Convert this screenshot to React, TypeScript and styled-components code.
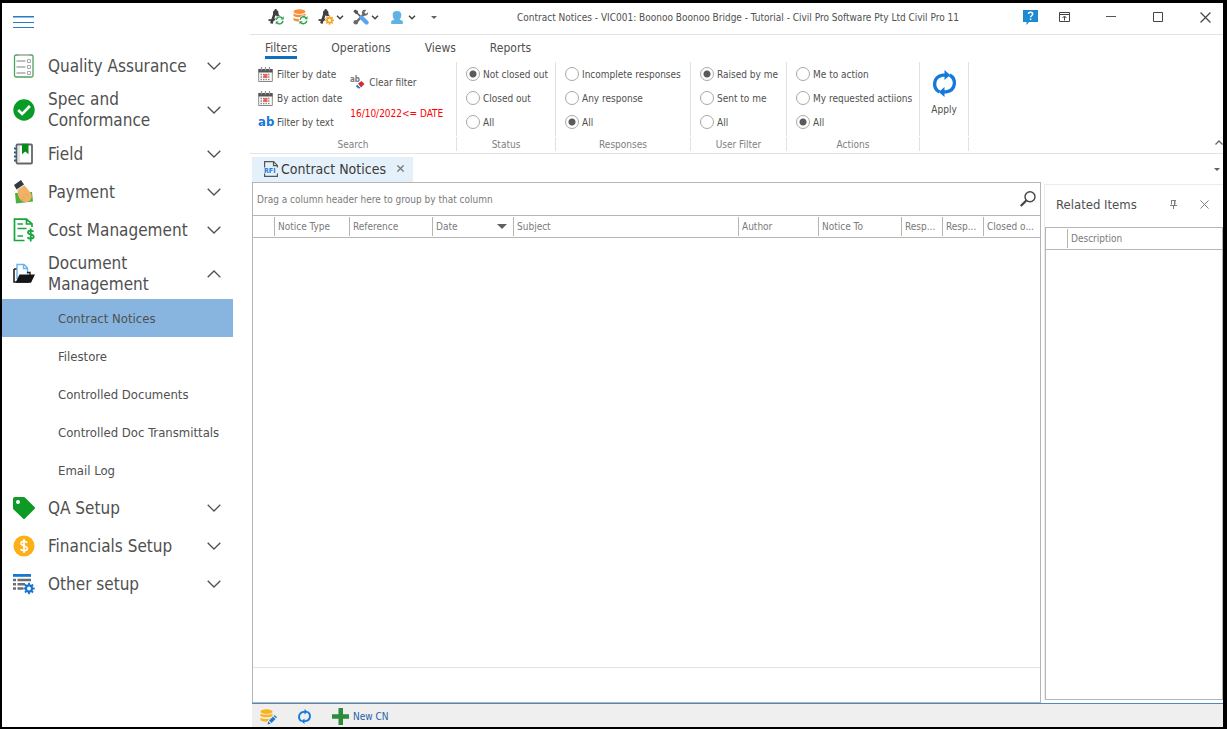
import React from "react";
import styled, { createGlobalStyle } from "styled-components";

const GlobalStyle = createGlobalStyle`
  *, *::before, *::after { box-sizing: border-box; }
  body { margin: 0; background: #000; }
  body, button, input { font-family: "DejaVu Sans Condensed", "DejaVu Sans", sans-serif; }
  button { background: none; border: 0; padding: 0; color: inherit; text-align: left; cursor: pointer; }
  svg { display: block; flex: none; }
  ul { list-style: none; margin: 0; padding: 0; }
`;

const Frame = styled.div`
  display: flex;
  min-height: 100vh;
  border: solid #000;
  border-width: 3px 4px 2px 2px;
  background: #fff;
  color: #505050;
  font-size: 10px;
  overflow: hidden;
`;

/* Sidebar */
const Sidebar = styled.nav`
  width: 248px;
  flex: none;
  padding-right: 17px;
`;
const MenuButton = styled.button`
  display: block;
  height: 44px;
  padding: 13px 11px 18px;
`;
const GroupButton = styled.button<{ $tall?: boolean }>`
  display: grid;
  grid-template-columns: 22px 1fr 14px;
  align-items: center;
  column-gap: 13px;
  width: 100%;
  height: ${(p) => (p.$tall ? 50 : 38)}px;
  padding: 0 12px 0 11px;
  font-size: 17px;
  line-height: 21px;
`;
const GroupText = styled.span<{ $narrow?: boolean }>`
  max-width: ${(p) => (p.$narrow ? "120px" : "none")};
  white-space: ${(p) => (p.$narrow ? "normal" : "nowrap")};
`;
const SubButton = styled.button<{ $active?: boolean }>`
  width: 100%;
  height: 38px;
  padding-left: 56px;
  font-size: 13px;
  white-space: nowrap;
  display: block;
  background: ${(p) => (p.$active ? "#88b5df" : "transparent")};
`;

/* Main column */
const Main = styled.main`
  flex: 1;
  min-width: 0;
  display: flex;
  flex-direction: column;
`;
const TitleBar = styled.header`
  display: flex;
  align-items: center;
  height: 32px;
  border-bottom: 1px solid #e3e3e3;
  padding-bottom: 3px;
`;
const QuickBar = styled.div`
  display: flex;
  align-items: center;
  width: 208px;
  padding-left: 18px;
  gap: 9px;
`;
const QuickButton = styled.button`
  display: flex;
  align-items: center;
  gap: 2px;
`;
const UserButton = styled(QuickButton)`
  gap: 5px;
  margin: 0 6px 0 3px;
`;
const Title = styled.h1`
  flex: 1;
  margin: 0;
  font-size: 10px;
  font-weight: 400;
  text-align: center;
  white-space: nowrap;
`;
const HelpButton = styled.button`
  display: grid;
  place-items: center;
  width: 24px;
  margin-right: 4px;
`;
const WindowButtons = styled.div`
  display: flex;
  gap: 11px;
`;
const WindowButton = styled.button`
  display: grid;
  place-items: center;
  width: 36px;
  height: 28px;
`;

/* Ribbon */
const RibbonTabs = styled.div`
  display: flex;
  gap: 34px;
  height: 27px;
  padding: 5px 15px 0;
`;
const RibbonTab = styled.button<{ $active?: boolean }>`
  height: 19px;
  font-size: 12px;
  line-height: 16px;
  border-bottom: 3px solid ${(p) => (p.$active ? "#106ebe" : "transparent")};
`;
const Ribbon = styled.div`
  display: flex;
  height: 92px;
  border-bottom: 1px solid #e3e3e3;
`;
const RibbonGroup = styled.fieldset<{ $width: number }>`
  display: flex;
  flex-direction: column;
  width: ${(p) => p.$width}px;
  min-width: 0;
  margin: 0;
  padding: 0;
  border: 0;
`;
const GroupBody = styled.div`
  flex: none;
  display: flex;
  height: 74px;
  border-right: 1px solid #e1e1e1;
`;
const GroupLabel = styled.div`
  height: 14px;
  margin-top: 1px;
  line-height: 16px;
  border-right: 1px solid #e1e1e1;
  text-align: center;
  color: #808080;
`;
const Stack = styled.div<{ $indent: number }>`
  display: flex;
  flex-direction: column;
  padding-left: ${(p) => p.$indent}px;
`;
const Command = styled.button`
  display: flex;
  align-items: center;
  gap: 4px;
  height: 24px;
  font-size: 10px;
  white-space: nowrap;
`;
const ClearStack = styled.div`
  display: flex;
  flex-direction: column;
  gap: 8px;
  padding: 8px 0 0 8px;
`;
const FilterExpression = styled.output`
  height: 24px;
  line-height: 24px;
  color: #f00;
  white-space: nowrap;
`;
const Option = styled.label`
  display: flex;
  align-items: center;
  gap: 3px;
  height: 24px;
  white-space: nowrap;
`;
const Radio = styled.input`
  appearance: none;
  flex: none;
  width: 14px;
  height: 14px;
  margin: 0;
  border: 1px solid #a8a8a8;
  border-radius: 50%;
  background: #fff;
  &:checked { background: radial-gradient(circle, #5a5a5a 3px, #fff 4px); }
`;
const ApplyButton = styled.button`
  display: flex;
  flex-direction: column;
  align-items: center;
  gap: 7px;
  width: 100%;
  padding-top: 8px;
  font-size: 10px;
`;
const Collapse = styled.button`
  align-self: flex-end;
  margin: 0 0 8px auto;
`;

/* Documents */
const DocTabs = styled.div`
  display: flex;
  justify-content: space-between;
  height: 28px;
  padding: 3px 0 0 2px;
`;
const DocTab = styled.div`
  display: flex;
  align-items: center;
  width: 161px;
  padding: 0 0 2px 12px;
  background: #e5f1fa;
  font-size: 14px;
  gap: 3px;
  white-space: nowrap;
  color: #3a3a3a;
`;
const CloseTab = styled.button`
  margin-left: 8px;
`;
const TabMenu = styled.button`
  margin-right: 3px;
`;
const Workspace = styled.div`
  flex: 1;
  display: flex;
  gap: 3px;
  padding-left: 2px;
`;
const GridPanel = styled.section`
  flex: 1;
  min-width: 0;
  display: flex;
  flex-direction: column;
  border: 1px solid #b5b5b5;
`;
const GroupingRow = styled.div`
  display: flex;
  align-items: center;
  justify-content: space-between;
  height: 33px;
  padding: 0 4px;
  color: #7a7a7a;
  border-bottom: 1px solid #b5b5b5;
`;
const Table = styled.table`
  width: 100%;
  table-layout: fixed;
  border-collapse: separate;
  border-spacing: 0;
  border-bottom: 1px solid #b5b5b5;
`;
const Th = styled.th<{ $width?: number }>`
  width: ${(p) => (p.$width ? p.$width + "px" : "auto")};
  height: 21px;
  padding: 0;
  font-weight: 400;
  text-align: left;
  color: #7a7a7a;
`;
const HeadCell = styled.div<{ $first?: boolean }>`
  display: flex;
  align-items: center;
  justify-content: space-between;
  height: 19px;
  padding: 0 6px 0 3px;
  border-left: 1px solid ${(p) => (p.$first ? "transparent" : "#b5b5b5")};
  white-space: nowrap;
`;
const GridFooter = styled.div`
  height: 35px;
  margin-top: auto;
  border-top: 1px solid #e3e3e3;
`;
const SidePanel = styled.aside`
  display: flex;
  flex-direction: column;
  width: 179px;
  margin: 2px 0 3px;
  border: solid #ececec;
  border-width: 1px 0 0 1px;
`;
const SideTitle = styled.div`
  display: flex;
  align-items: center;
  height: 42px;
  padding: 0 14px 3px 11px;
`;
const SideHeading = styled.h2`
  flex: 1;
  margin: 0;
  font-size: 13px;
  font-weight: 400;
`;
const SideTools = styled.div`
  display: flex;
  align-items: center;
  gap: 23px;
`;
const SideGrid = styled.div`
  flex: 1;
  border: 1px solid #b5b5b5;
`;
const StatusBar = styled.footer`
  display: flex;
  align-items: center;
  gap: 20px;
  height: 24px;
  margin-left: 2px;
  padding: 2px 0 0 8px;
  background: #efefef;
  border-top: 1px solid #4a8ac6;
`;
const StatusButton = styled.button`
  display: flex;
  align-items: center;
  gap: 4px;
  font-size: 10px;
  color: #1f5fa8;
`;

/* Icons */
const Chevron = ({ up }: { up?: boolean }) => (
  <svg width="14" height="8" viewBox="0 0 14 8" fill="none" stroke="#505050" strokeWidth="1.3">
    <path d={up ? "M.7 7.3 7 1l6.3 6.3" : "M.7.7 7 7 13.3.7"} />
  </svg>
);
const SmallChevron = () => (
  <svg width="8" height="5" viewBox="0 0 8 5" fill="none" stroke="#444" strokeWidth="1.5">
    <path d="M1 .7 4 3.7 7 .7" />
  </svg>
);
const MenuIcon = () => (
  <svg width="21" height="13" viewBox="0 0 21 13" fill="#2a7bc8">
    <path d="M0 0h21v1.500H0zM0 6h21v1H0zM0 11h21v1H0z" />
  </svg>
);
const ChecklistIcon = () => (
  <svg width="22" height="24" viewBox="0 0 22 24" fill="none">
    <rect x="1.500" y="1" width="18.500" height="22" rx="1.500" stroke="#4ea35e" strokeWidth="1.300" />
    <path d="M5.500 1h11" stroke="#bbb" strokeWidth="1.800" />
    <path d="M3.500 7h9M3.500 13h9M3.500 19h9" stroke="#aaa" strokeWidth="1.300" />
    <path d="M14.500 5.500h3v3h-3zM14.500 11.500h3v3h-3zM14.500 17.500h3v3h-3z" stroke="#aaa" />
  </svg>
);
const CheckIcon = () => (
  <svg width="22" height="22" viewBox="0 0 22 22">
    <circle cx="11" cy="11" r="10.700" fill="#089c26" />
    <path d="m5.200 11 4 4 7.700-8" fill="none" stroke="#fff" strokeWidth="2.600" />
  </svg>
);
const NotebookIcon = () => (
  <svg width="22" height="22" viewBox="0 0 22 22">
    <rect x="3.500" y="1.500" width="15.500" height="19" rx="1" fill="#fff" stroke="#666" strokeWidth="1.800" />
    <path d="M6 2v18" stroke="#c8c8c8" strokeWidth="1" />
    <path d="M9 .700h6.500v10.600l-3.200-2.800L9 11.300z" fill="#068a1c" />
    <path d="M1 5.500h3M1 9.500h3M1 13.500h3M1 17.500h3" stroke="#2f5f86" strokeWidth="1.800" />
  </svg>
);
const PaymentIcon = () => (
  <svg width="22" height="24" viewBox="0 0 22 24">
    <path d="m2 13 17-1 1 9.500L3 23.500z" fill="#4fae3f" />
    <path d="M5 8c2-3 5-3.500 7-2l5 6c2.500 3 2 6 0 8.500-3 2-6 2-8 .500-4-3-5-8-4-13z" fill="#f2b266" />
    <path d="m9 16 4 3M8 18.500l3 2M12 13.500l4 3" stroke="#e0a05c" strokeWidth=".7" fill="none" />
    <path d="M1 5 8 0l3 4.500L3.500 9.500z" fill="#34393f" />
    <path d="m4 10 7.500-5" stroke="#d9dde0" strokeWidth="1.200" />
  </svg>
);
const CostIcon = () => (
  <svg width="22" height="24" viewBox="0 0 22 24" fill="none" stroke="#17a63c" strokeWidth="1.700">
    <path d="M11.500 22.500H1.500V1.200h12L19 6v3M13.500 1.200V6H19" />
    <path d="M4.500 6H10M4.500 10.500h9M4.500 18H10" />
    <path d="M20.500 13.700c-1-1.500-5.500-1.700-5.500.7 0 2.600 5.700 1.400 5.700 4.200 0 2.700-5 2.700-6.200.6M17.700 10.500v13" strokeWidth="1.800" />
  </svg>
);
const FolderIcon = () => (
  <svg width="22" height="22" viewBox="0 0 22 22">
    <path d="M1 6v13h15" fill="none" stroke="#222" strokeWidth="1.600" />
    <path d="M4 16V1.500h7l3.500 3.500v6M10.500 1.500V5.500h4" fill="#fff" stroke="#68b3f0" strokeWidth="1.400" />
    <path d="M1 6h2.500M14 9.500h3V12" fill="none" stroke="#222" strokeWidth="1.400" />
    <path d="M6.500 11.500H22l-4 8.300H2.500z" fill="#151515" />
  </svg>
);
const TagIcon = () => (
  <svg width="22" height="22" viewBox="0 0 22 22">
    <path fillRule="evenodd" d="M0 2C0 .900.900 0 2 0h8.500q1 0 1.500.6L21.500 10q1 1 0 2L12 21.500q-1 1-2 0L.6 12.500Q0 12 0 11zM5 3a2 2 0 1 0 0 4 2 2 0 0 0 0-4z" fill="#0d9b25" />
  </svg>
);
const CoinIcon = () => (
  <svg width="22" height="22" viewBox="0 0 22 22" fill="none">
    <circle cx="11" cy="11" r="10.500" fill="#fdaf17" />
    <path d="M14 7.800c-1-2-6-1.900-6 .7 0 2.900 6.300 1.900 6.300 5 0 2.800-5.500 2.700-6.700.6M11 4v14" stroke="#fff" strokeWidth="1.700" />
  </svg>
);
const gearTeeth = [0, 45, 90, 135, 180, 225, 270, 315];
const Gear = ({ x, y, color, scale = 1 }: { x: number; y: number; color: string; scale?: number }) => (
  <g transform={`translate(${x} ${y}) scale(${scale})`}>
    <circle r="3.200" fill="none" stroke={color} strokeWidth="2.400" />
    {gearTeeth.map((a) => (
      <rect key={a} x="-1" y="-6" width="2" height="2.500" fill={color} transform={`rotate(${a})`} />
    ))}
  </g>
);
const SettingsListIcon = () => (
  <svg width="22" height="22" viewBox="0 0 22 22">
    <path d="M0 1h18v2.800H0z" fill="#1976d2" />
    <path d="M0 5.800h3v2.500H0zM4.500 5.800H18v2.500H4.500zM0 10h3v2.500H0zM4.500 10H12v2.500H4.500zM0 14.200h3v2.500H0zM4.500 14.200H10v2.500H4.500z" fill="#6d6d72" />
    <Gear x={16} y={15.500} color="#1976d2" scale={0.95} />
  </svg>
);
const MiniRefresh = ({ x, y }: { x: number; y: number }) => (
  <g transform={`translate(${x} ${y})`}>
    <circle r="4.600" fill="#fff" />
    <path d="M-3.300-.5A3.300 3.300 0 0 1 2.300-2.500M3.300.5A3.300 3.300 0 0 1-2.300 2.500" fill="none" stroke="#25a045" strokeWidth="1.400" />
    <path d="M4-4.200V-1H.8zM-4 4.200V1H-.8z" fill="#25a045" />
  </g>
);
const CompassIcon = ({ badge }: { badge: "refresh" | "gear" }) => (
  <svg width="16" height="16" viewBox="0 0 16 16">
    <path d="M7.200 3 3.300 14.500M8.200 3l4 9" stroke="#404040" strokeWidth="2.600" fill="none" />
    <path d="M.5 10.800c4 .8 8.500-.6 11.500-4" stroke="#404040" strokeWidth="1.800" fill="none" />
    <path d="M6.800 0h1.800v2H6.800z" fill="#404040" />
    <circle cx="7.700" cy="3.700" r="2.700" fill="#404040" />
    {badge === "refresh" ? <MiniRefresh x={11.700} y={11.400} /> : (
      <>
        <circle cx="11.500" cy="11.300" r="4.600" fill="#fff" />
        <Gear x={11.500} y={11.300} color="#f5a623" scale={0.75} />
      </>
    )}
  </svg>
);
const Cylinders = ({ color }: { color: string }) => (
  <g fill={color}>
    <ellipse cx="6.500" cy="2.600" rx="6" ry="2.300" />
    <path d="M.5 4.200c2 2 10 2 12 0v2.500c-2 2.200-10 2.200-12 0zM.5 8.500c2 2 10 2 12 0V11c-2 2.200-10 2.200-12 0z" />
  </g>
);
const DatabaseRefreshIcon = () => (
  <svg width="16" height="16" viewBox="0 0 16 16">
    <Cylinders color="#f5903d" />
    <MiniRefresh x={10.500} y={11.200} />
  </svg>
);
const DatabaseEditIcon = () => (
  <svg width="17" height="17" viewBox="0 0 17 17">
    <g transform="translate(0 1)"><Cylinders color="#fbb31c" /></g>
    <path d="m6.500 17 1-4 6.500-6.500 3 3-6.500 6.500z" fill="#efefef" />
    <path d="m7.500 16.500.8-3.200 2.400 2.400zM9 12.600l4-4 2.500 2.500-4 4zM13.700 8l1-1L17 9.300l-1 1z" fill="#2577c9" />
  </svg>
);
const ToolsIcon = () => (
  <svg width="16" height="16" viewBox="0 0 16 16" fill="none">
    <path d="m10.500 5.500-7.500 8" stroke="#686868" strokeWidth="2.400" />
    <path d="M10 1.300c-2 2-1 5 1.500 5.500 2 .3 4-1.500 3.700-3.800L13 5l-1.800-1.700L13.300 1.200c-1-.6-2.300-.6-3.300.1z" fill="#686868" />
    <circle cx="2.800" cy="13.300" r="2.300" fill="#686868" />
    <path d="M.3 2.200 2 .500l3 1.600v1.700L4.500 4.500 3 5.200z" fill="#555" />
    <path d="m3.500 3.500 4.500 4.500" stroke="#555" strokeWidth="1.600" />
    <path d="m8.500 8.500 5 5" stroke="#5aa6ea" strokeWidth="4.200" strokeLinecap="round" />
  </svg>
);
const UserIcon = () => (
  <svg width="12" height="13" viewBox="0 0 12 13" fill="#5fb2e4">
    <path d="M6 0c3 0 4.300 1.600 4.300 4 0 2-.7 3.600-1.800 4.600L11.800 10v3H.2v-3l3.300-1.400C2.400 7.600 1.700 6 1.700 4 1.700 1.600 3 0 6 0z" />
  </svg>
);
const CalendarIcon = () => (
  <svg width="15" height="15" viewBox="0 0 15 15">
    <path d="M.7 2.500h13.600V14.500H.7z" fill="#fff" stroke="#8a8a8a" />
    <path d="M.5 2h14v3.500H.5z" fill="#555" />
    <path d="M3.500 0v3.500M7.500 0v3.500M11.500 0v3.500" stroke="#999" strokeWidth="1.300" />
    <path d="M2.500 7.500h10M2.500 10h10M2.500 12.500h10" stroke="#8a8a8a" strokeWidth="1.300" strokeDasharray="1.500 1" />
    <path d="M5.500 7h4v4h-4z" fill="#f2615c" />
  </svg>
);
const AbText = styled.span`
  width: 15px;
  font: bold 13px "DejaVu Sans Condensed", "DejaVu Sans", sans-serif;
  line-height: 14px;
  color: #1878d4;
`;
const ClearFilterIcon = () => (
  <svg width="15" height="14" viewBox="0 0 15 14">
    <text x="0" y="7" fontSize="8" fontWeight="bold" fill="#777">ab</text>
    <path d="m8 8.500 3.500-2.500 3 3L11 12.500z" fill="#d12f2f" />
    <path d="m7 9.500 3.300 3.300-1.500 1L6 11.500z" fill="#2a72cc" />
  </svg>
);
const RefreshIcon = ({ size }: { size: number }) => (
  <svg width={size} height={size} viewBox="0 0 26 26" fill="none" stroke="#1579dc" strokeWidth="3.200">
    <path d="M8 21.200C1.500 17.500 1.500 6.500 11.500 4.900h3M18 4.800c6.500 3.700 6.500 14.700-3.500 16.300h-3" />
    <path d="M13 0v9.700L18.500 4.900zM13 26v-9.700L7.500 21.100z" fill="#1579dc" stroke="none" />
  </svg>
);
const HelpIcon = () => (
  <svg width="15" height="16" viewBox="0 0 15 16">
    <path d="M0 1h15v12H6l-2.500 3V13H0z" fill="#1e8ad2" />
    <path d="M5.500 5c0-2.300 4.200-2.200 4.200 0 0 1.500-2.100 1.500-2.100 3.300M7.600 9.500v1.600" fill="none" stroke="#fff" strokeWidth="1.500" />
  </svg>
);
const RibbonDisplayIcon = () => (
  <svg width="11" height="10" viewBox="0 0 11 10" fill="none" stroke="#444">
    <path d="M.5.5h10v9H.5zM.5 2.500h10M5.500 8.500v-4M3.500 6l2-2 2 2" />
  </svg>
);
const CloseIcon = ({ size, color }: { size: number; color: string }) => (
  <svg width={size} height={size} viewBox="0 0 10 10" stroke={color} strokeWidth={size > 7 ? 1.1 : 1.8}>
    <path d="m.5.5 9 9M9.500.5l-9 9" />
  </svg>
);
const Caret = ({ width = 6 }: { width?: number }) => (
  <svg width={width} height={width / 2} viewBox="0 0 6 3" fill="#606060">
    <path d="M0 0h6L3 3z" />
  </svg>
);
const RfiIcon = () => (
  <svg width="14" height="16" viewBox="0 0 14 16">
    <path d="M.6.6h9L13.400 4.400v11H.6zM9.500.6v4h4" fill="none" stroke="#555" strokeWidth="1.200" />
    <path d="M0 6.500h14v6H0z" fill="#e5f1fa" />
    <text x="0" y="12" fontSize="7" fontWeight="bold" fill="#1b7fdd">RFI</text>
  </svg>
);
const SearchIcon = () => (
  <svg width="16" height="16" viewBox="0 0 16 16" fill="none" stroke="#444">
    <circle cx="10" cy="5.800" r="5" strokeWidth="1.400" />
    <path d="M6.300 9.500.800 15" strokeWidth="2.200" />
  </svg>
);
const PinIcon = () => (
  <svg width="7" height="9" viewBox="0 0 7 9" fill="none" stroke="#808080">
    <path d="M1 .5h5M1.500.5v4M5 .5v4M4.500 1v4M0 5.500h7M3.500 5.500V9" />
  </svg>
);
const PlusIcon = () => (
  <svg width="17" height="17" viewBox="0 0 17 17" fill="#2c8b3c">
    <path d="M6.500 0h4.500v6.300h6v4.400h-6V17H6.500v-6.300H0V6.300h6.500z" />
  </svg>
);

type NavGroup = { label: string; icon: React.ReactNode; tall?: boolean; children?: string[] };
const navGroups: NavGroup[] = [
  { label: "Quality Assurance", icon: <ChecklistIcon /> },
  { label: "Spec and Conformance", icon: <CheckIcon />, tall: true },
  { label: "Field", icon: <NotebookIcon /> },
  { label: "Payment", icon: <PaymentIcon /> },
  { label: "Cost Management", icon: <CostIcon /> },
  {
    label: "Document Management", icon: <FolderIcon />, tall: true,
    children: ["Contract Notices", "Filestore", "Controlled Documents", "Controlled Doc Transmittals", "Email Log"],
  },
  { label: "QA Setup", icon: <TagIcon /> },
  { label: "Financials Setup", icon: <CoinIcon /> },
  { label: "Other setup", icon: <SettingsListIcon /> },
];

const radioGroups = [
  { label: "Status", width: 99, options: ["Not closed out", "Closed out", "All"], checked: 0 },
  { label: "Responses", width: 135, options: ["Incomplete responses", "Any response", "All"], checked: 2 },
  { label: "User Filter", width: 96, options: ["Raised by me", "Sent to me", "All"], checked: 0 },
  { label: "Actions", width: 133, options: ["Me to action", "My requested actiions", "All"], checked: 2 },
];

const columns: { label: string; width?: number; sorted?: boolean }[] = [
  { label: "", width: 21 },
  { label: "Notice Type", width: 75 },
  { label: "Reference", width: 83 },
  { label: "Date", width: 81, sorted: true },
  { label: "Subject" },
  { label: "Author", width: 80 },
  { label: "Notice To", width: 83 },
  { label: "Resp...", width: 41 },
  { label: "Resp...", width: 41 },
  { label: "Closed o...", width: 57 },
];

export default function App() {
  return (
    <>
      <GlobalStyle />
      <Frame>
        <Sidebar aria-label="Modules">
          <MenuButton aria-label="Menu"><MenuIcon /></MenuButton>
          {navGroups.map((g) => (
            <React.Fragment key={g.label}>
              <GroupButton $tall={g.tall} aria-expanded={!!g.children}>
                {g.icon}
                <GroupText $narrow={g.tall}>{g.label}</GroupText>
                <Chevron up={!!g.children} />
              </GroupButton>
              {g.children && (
                <ul>
                  {g.children.map((c, i) => (
                    <li key={c}><SubButton $active={i === 0}>{c}</SubButton></li>
                  ))}
                </ul>
              )}
            </React.Fragment>
          ))}
        </Sidebar>

        <Main>
          <TitleBar>
            <QuickBar>
              <QuickButton aria-label="Refresh project"><CompassIcon badge="refresh" /></QuickButton>
              <QuickButton aria-label="Refresh data"><DatabaseRefreshIcon /></QuickButton>
              <QuickButton aria-label="Project settings"><CompassIcon badge="gear" /><SmallChevron /></QuickButton>
              <QuickButton aria-label="Tools"><ToolsIcon /><SmallChevron /></QuickButton>
              <UserButton aria-label="User"><UserIcon /><SmallChevron /></UserButton>
              <QuickButton aria-label="Customise toolbar"><Caret /></QuickButton>
            </QuickBar>
            <Title>Contract Notices - VIC001: Boonoo Boonoo Bridge - Tutorial - Civil Pro Software Pty Ltd Civil Pro 11</Title>
            <HelpButton aria-label="Help"><HelpIcon /></HelpButton>
            <WindowButtons>
              <WindowButton aria-label="Ribbon display"><RibbonDisplayIcon /></WindowButton>
              <WindowButton aria-label="Minimise">
                <svg width="10" height="2" viewBox="0 0 10 2"><path d="M0 0h10v1H0z" fill="#555" /></svg>
              </WindowButton>
              <WindowButton aria-label="Maximise">
                <svg width="10" height="10" viewBox="0 0 10 10"><path d="M.5.5h9v9h-9z" fill="none" stroke="#444" /></svg>
              </WindowButton>
              <WindowButton aria-label="Close"><CloseIcon size={11} color="#444" /></WindowButton>
            </WindowButtons>
          </TitleBar>

          <RibbonTabs>
            {["Filters", "Operations", "Views", "Reports"].map((t, i) => (
              <RibbonTab key={t} $active={i === 0}>{t}</RibbonTab>
            ))}
          </RibbonTabs>
          <Ribbon>
            <RibbonGroup $width={207} aria-label="Search">
              <GroupBody>
                <Stack $indent={8}>
                  <Command><CalendarIcon />Filter by date</Command>
                  <Command><CalendarIcon />By action date</Command>
                  <Command><AbText>ab</AbText>Filter by text</Command>
                </Stack>
                <ClearStack>
                  <Command><ClearFilterIcon />Clear filter</Command>
                  <FilterExpression>16/10/2022&lt;= DATE</FilterExpression>
                </ClearStack>
              </GroupBody>
              <GroupLabel>Search</GroupLabel>
            </RibbonGroup>
            {radioGroups.map((g) => (
              <RibbonGroup key={g.label} $width={g.width} aria-label={g.label}>
                <GroupBody>
                  <Stack $indent={9}>
                    {g.options.map((o, i) => (
                      <Option key={o}>
                        <Radio type="radio" name={g.label} defaultChecked={i === g.checked} />
                        {o}
                      </Option>
                    ))}
                  </Stack>
                </GroupBody>
                <GroupLabel>{g.label}</GroupLabel>
              </RibbonGroup>
            ))}
            <RibbonGroup $width={49} aria-label="Apply">
              <GroupBody>
                <ApplyButton><RefreshIcon size={27} />Apply</ApplyButton>
              </GroupBody>
              <GroupLabel />
            </RibbonGroup>
            <Collapse aria-label="Collapse ribbon">
              <svg width="8" height="5" viewBox="0 0 8 5" fill="none" stroke="#666" strokeWidth="1.300"><path d="M.5 4.500 4 1l3.500 3.500" /></svg>
            </Collapse>
          </Ribbon>

          <DocTabs>
            <DocTab>
              <RfiIcon />
              Contract Notices
              <CloseTab aria-label="Close tab"><CloseIcon size={7} color="#777" /></CloseTab>
            </DocTab>
            <TabMenu aria-label="Open documents"><Caret /></TabMenu>
          </DocTabs>

          <Workspace>
            <GridPanel>
              <GroupingRow>
                Drag a column header here to group by that column
                <button aria-label="Search"><SearchIcon /></button>
              </GroupingRow>
              <Table>
                <thead>
                  <tr>
                    {columns.map((c, i) => (
                      <Th key={i} $width={c.width}>
                        <HeadCell $first={i === 0}>
                          {c.label}
                          {c.sorted && <Caret width={10} />}
                        </HeadCell>
                      </Th>
                    ))}
                  </tr>
                </thead>
              </Table>
              <GridFooter />
            </GridPanel>
            <SidePanel>
              <SideTitle>
                <SideHeading>Related Items</SideHeading>
                <SideTools>
                  <button aria-label="Pin"><PinIcon /></button>
                  <button aria-label="Close panel"><CloseIcon size={9} color="#808080" /></button>
                </SideTools>
              </SideTitle>
              <SideGrid>
                <Table>
                  <thead>
                    <tr>
                      <Th $width={21}><HeadCell $first /></Th>
                      <Th><HeadCell>Description</HeadCell></Th>
                    </tr>
                  </thead>
                </Table>
              </SideGrid>
            </SidePanel>
          </Workspace>

          <StatusBar>
            <StatusButton aria-label="Edit data"><DatabaseEditIcon /></StatusButton>
            <StatusButton aria-label="Refresh"><RefreshIcon size={15} /></StatusButton>
            <StatusButton><PlusIcon />New CN</StatusButton>
          </StatusBar>
        </Main>
      </Frame>
    </>
  );
}
